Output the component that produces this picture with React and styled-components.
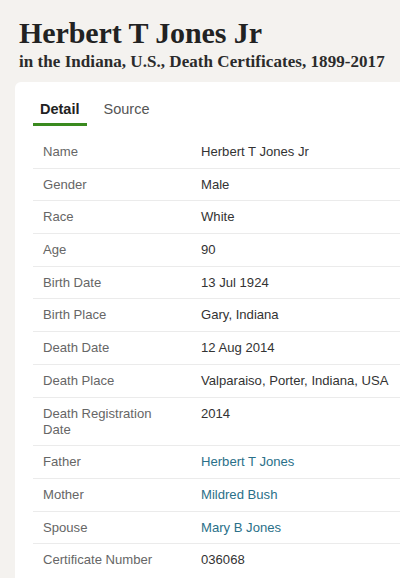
import React from "react"
import styled, { createGlobalStyle } from "styled-components"

const rows = [
  { label: "Name", value: "Herbert T Jones Jr" },
  { label: "Gender", value: "Male" },
  { label: "Race", value: "White" },
  { label: "Age", value: "90" },
  { label: "Birth Date", value: "13 Jul 1924" },
  { label: "Birth Place", value: "Gary, Indiana" },
  { label: "Death Date", value: "12 Aug 2014" },
  { label: "Death Place", value: "Valparaiso, Porter, Indiana, USA" },
  { label: "Death Registration Date", value: "2014" },
  { label: "Father", value: "Herbert T Jones", link: true },
  { label: "Mother", value: "Mildred Bush", link: true },
  { label: "Spouse", value: "Mary B Jones", link: true },
  { label: "Certificate Number", value: "036068" },
]

const GlobalStyle = createGlobalStyle`
  body {
    margin: 0;
    background: #f4f2ef;
    overflow: hidden;
  }
`

export default function App() {
  return (
    <Page>
      <GlobalStyle />
      <Header>
        <Title>Herbert T Jones Jr</Title>
        <Subtitle>in the Indiana, U.S., Death Certificates, 1899-2017</Subtitle>
      </Header>
      <Card>
        <Tabs>
          <Tab active>Detail</Tab>
          <Tab>Source</Tab>
        </Tabs>
        <Table>
          {rows.map(row => (
            <Row key={row.label}>
              <Label>{row.label}</Label>
              <Value link={row.link}>{row.value}</Value>
            </Row>
          ))}
        </Table>
      </Card>
    </Page>
  )
}

const Page = styled.div`
  width: 400px;
  height: 578px;
  padding: 16px 0 0 15px;
  box-sizing: border-box;
  font-family: "Liberation Sans", Arial, sans-serif;
`

const Header = styled.div`
  padding-left: 4px;
`

const Title = styled.h1`
  margin: 0;
  font-family: "Liberation Serif", "Times New Roman", serif;
  font-size: 30px;
  line-height: 34px;
  font-weight: 700;
  letter-spacing: -0.1px;
  color: #222;
`

const Subtitle = styled.h2`
  margin: 2px 0 0;
  font-family: "Liberation Serif", "Times New Roman", serif;
  font-size: 17px;
  line-height: 20px;
  font-weight: 700;
  letter-spacing: 0.05px;
  white-space: nowrap;
  color: #2b2b2b;
`

const Card = styled.div`
  margin-top: 10px;
  background: #fff;
  border-radius: 6px 0 0 0;
  padding: 14px 0 0 18px;
  height: 600px;
`

const Tabs = styled.div`
  display: flex;
  gap: 10px;
`

const Tab = styled.div`
  padding: 4px 7px 5px;
  font-size: 14.5px;
  line-height: 18px;
  font-weight: ${props => (props.active ? 700 : 400)};
  color: ${props => (props.active ? "#222" : "#555")};
  border-bottom: 3px solid ${props => (props.active ? "#3a8a1f" : "transparent")};
`

const Table = styled.div`
  margin-top: 10px;
`

const Row = styled.div`
  display: grid;
  grid-template-columns: 158px 1fr;
  padding: 8px 0 7.7px 10px;
  border-bottom: 1px solid #ebebeb;
  font-size: 13.1px;
  line-height: 16px;
  &:last-child {
    border-bottom: none;
  }
`

const Label = styled.div`
  color: #666;
  padding-right: 28px;
`

const Value = styled.div`
  color: ${props => (props.link ? "#2a7089" : "#333")};
`
